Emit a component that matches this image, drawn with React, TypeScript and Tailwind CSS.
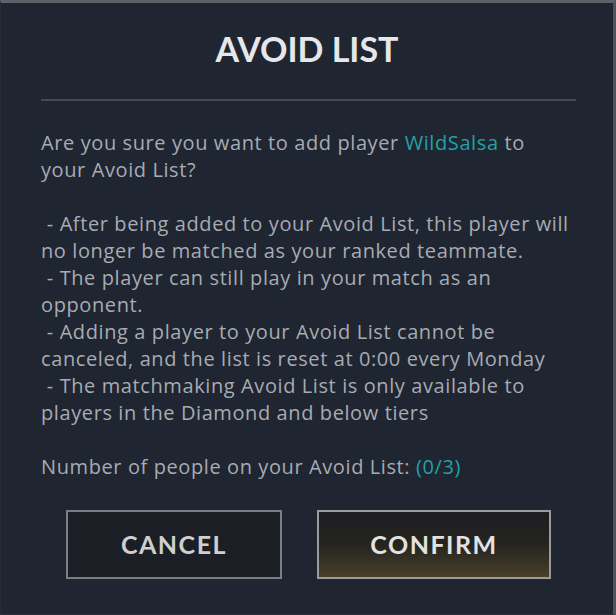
import React from "react";

const body = "text-[20px] leading-[27px] tracking-[0.6px] whitespace-nowrap";

const Cyan = ({ children }: { children: React.ReactNode }) => (
  <span className="text-[#23a1a6]">{children}</span>
);

const App = () => {
  return (
    <div className="w-[616px] h-[615px] bg-[#1f2531] border-t-[3px] border-r-[3px] border-b border-l border-t-[#5d6168] border-r-[#4f535a] border-b-[#2c313a] border-l-[#262b34] flex flex-col [font-family:'Open_Sans',sans-serif]">
      <h1 className="mt-[29px] text-center text-[34px] leading-[34px] font-bold text-[#e6e7ea] [font-family:Lato,sans-serif]">
        AVOID LIST
      </h1>
      <div className="mt-[33px] ml-[40px] mr-[37px] h-[2px] bg-[#444a55]" />

      <div className="mt-[28px] px-[40px] text-[#a7abb2]">
        <p className={body}>
          Are you sure you want to add player <Cyan>WildSalsa</Cyan> to
        </p>
        <p className={body}>your Avoid List?</p>
        <p className={body}>&nbsp;</p>
        <p className={body}>&nbsp;- After being added to your Avoid List, this player will</p>
        <p className={body}>no longer be matched as your ranked teammate.</p>
        <p className={body}>&nbsp;- The player can still play in your match as an</p>
        <p className={body}>opponent.</p>
        <p className={body}>&nbsp;- Adding a player to your Avoid List cannot be</p>
        <p className={body}>canceled, and the list is reset at 0:00 every Monday</p>
        <p className={body}>&nbsp;- The matchmaking Avoid List is only available to</p>
        <p className={body}>players in the Diamond and below tiers</p>
        <p className={body}>&nbsp;</p>
        <p className={body}>
          Number of people on your Avoid List: <Cyan>(0/3)</Cyan>
        </p>
      </div>

      <div className="mt-[30px] flex pl-[65px] gap-[35px]">
        <button className="w-[216px] h-[69px] border-2 border-[#7c7e82] bg-[#1b1e24] text-[#cfcfcf] text-[25px] font-bold tracking-[1.5px] [font-family:Lato,sans-serif]">
          CANCEL
        </button>
        <button className="w-[234px] h-[69px] border-2 border-[#9a9b9c] bg-gradient-to-b from-[#1c1d21] via-[#25241f] to-[#4a3f2b] text-[#e2e2e2] text-[25px] font-bold tracking-[1.5px] [font-family:Lato,sans-serif]">
          CONFIRM
        </button>
      </div>
    </div>
  );
};

export default App;
